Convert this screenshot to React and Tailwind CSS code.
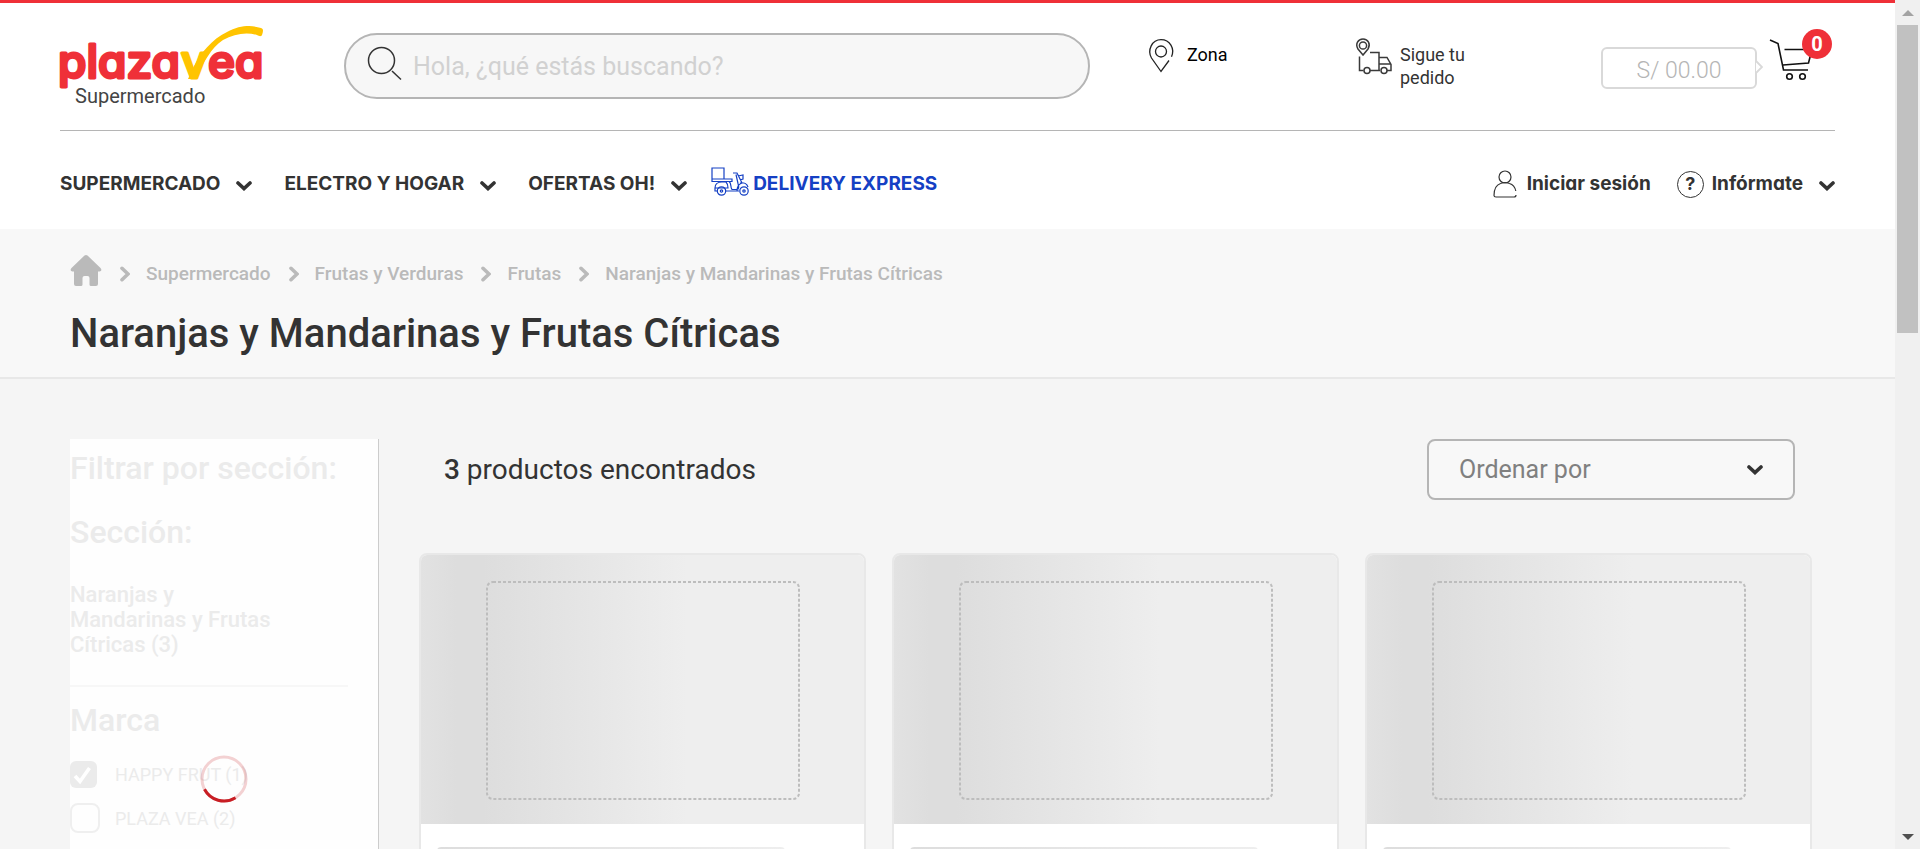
import React from "react";

function Chevron({ className = "" }) {
  return (
    <svg viewBox="0 0 16 10" className={"h-[10px] w-4 shrink-0 " + className} fill="none" stroke="currentColor" strokeWidth="3.6" aria-hidden="true">
      <path d="M2 2 8 7.600 14 2" strokeLinecap="round" />
    </svg>
  );
}

function Crumb({ children, last }) {
  return (
    <li className="flex items-center gap-4">
      <svg viewBox="0 0 10 16" className="h-4 w-[10px] shrink-0" fill="none" stroke="currentColor" strokeWidth="3.6" aria-hidden="true">
        <path d="M2 2.300 8 8l-6 5.700" strokeLinecap="round" />
      </svg>
      <a href="#categoria" aria-current={last ? "page" : undefined}>{children}</a>
    </li>
  );
}

function Logo() {
  return (
    <a href="#inicio" className="block w-[210px] pt-[21px]" aria-label="plazavea Supermercado">
      <svg viewBox="0 0 210 70" className="h-[70px] w-[210px] overflow-visible" aria-hidden="true">
        <g
          className="font-['Inter',sans-serif] text-[46px] font-medium [font-feature-settings:'cv11'_1]"
          fill="#ef3038"
          stroke="#ef3038"
          strokeWidth="3"
          strokeLinejoin="round"
        >
          <text x="-2" y="54">plaza</text>
          <text x="121" y="54" fill="#ffc400" stroke="#ffc400">v</text>
          <text x="148" y="54">ea</text>
        </g>
        <path d="M128 55 134 42C140 30 152 15 167 8 180 1 192 1 201 4 204 5 203 8 202 11 201 13 199 12 197 11 186 8 174 10 163 16 151 24 144 38 135 55Z" fill="#ffc400" />
      </svg>
      <span className="-mt-[10px] block pl-[15px] text-[20px] leading-6 text-[#444]">Supermercado</span>
    </a>
  );
}

function TopBar() {
  return (
    <div className="flex h-32 items-start border-b border-[#b5b5b5]">
      <div className="w-[284px] shrink-0">
        <Logo />
      </div>
      <div className="mt-[30px] flex h-[66px] min-w-0 flex-1 items-center rounded-full border-2 border-[#b5b5b5] bg-[#f7f7f7] pl-[21px]">
        <svg viewBox="0 0 36 36" className="-mt-1 h-9 w-9 shrink-0" fill="none" stroke="#333" strokeWidth="1.5" aria-hidden="true">
          <circle cx="14.500" cy="14.500" r="13" />
          <path d="m25 25 9 8.500" />
        </svg>
        <input type="search" aria-label="Buscar productos" className="ml-[10px] h-10 min-w-0 flex-1 bg-transparent text-[25px] outline-none placeholder:text-[#d1d1d1]" placeholder="Hola, ¿qué estás buscando?" />
      </div>
      <div className="flex w-[745px] shrink-0 pt-9">
        <a href="#zona" className="flex w-[266px] items-start pl-[59px] text-[18px] leading-[23px] text-black">
          <svg viewBox="0 0 24 34" className="h-[34px] w-6 shrink-0 overflow-visible" fill="none" stroke="#222" strokeWidth="1.3" aria-hidden="true">
            <path d="M20 21.500 12 32.500 2.500 19C-2 11 3 .7 12 .7c9 0 14 9 10.500 17" />
            <circle cx="12" cy="12.500" r="5.500" />
          </svg>
          <span className="ml-[14px] pt-1">Zona</span>
        </a>
        <a href="#pedido" className="flex w-[245px] items-start text-[18px] leading-[23px] text-[#333]">
          <svg viewBox="0 0 36 36" className="h-9 w-9 shrink-0 overflow-visible" fill="none" stroke="#3a3a3a" strokeWidth="1.5" aria-hidden="true">
            <path d="M7 16 2 10C-1 5 2 0 7 0s8 5 5 10ZM14 13.500h9V31.500M3.500 17.500v14h4M14 31.500h10M23 18.500h8l4 7v6h-4M23 25h11.500" />
            <circle cx="7" cy="6.500" r="3.600" />
            <circle cx="11" cy="31.500" r="3" />
            <circle cx="28" cy="31.500" r="3" />
          </svg>
          <span className="ml-2 w-20 pt-1">Sigue tu pedido</span>
        </a>
        <a href="#carrito" className="relative flex items-start">
          <span className="mt-2 flex h-[42px] w-[156px] items-center justify-center rounded-md border-2 border-[#d9d9d9] pt-[6px] text-[23px] font-light text-[#b5b5b5]">S/ 00.00</span>
          <svg viewBox="0 0 8 14" className="mt-[21px] -ml-[2px] h-[14px] w-2" fill="#fff" stroke="#d9d9d9" strokeWidth="1.8" aria-hidden="true">
            <path d="m1 1 6 6-6 6" />
          </svg>
          <svg viewBox="0 0 44 42" className="ml-[6px] h-[42px] w-11" fill="none" stroke="#111" strokeWidth="1.6" aria-hidden="true">
            <path d="m1 1 8 3.500 5.500 26.500H39M15.500 10.500H43l-3.500 13.500-25.500 2" />
            <circle cx="20.500" cy="37.500" r="2.800" />
            <circle cx="33.500" cy="37.500" r="2.800" />
          </svg>
          <span className="absolute -top-[10px] left-[201px] flex h-[30px] w-[30px] items-center justify-center rounded-full bg-[#ef3038] text-[20px] font-bold text-white">0</span>
        </a>
      </div>
    </div>
  );
}

function MainNav() {
  return (
    <nav className="flex h-[98px] items-center justify-between pt-2 font-['Inter',sans-serif] text-[19px] font-bold text-[#333] [font-feature-settings:'cv11'_1]">
      <div className="flex items-center gap-8">
        {["SUPERMERCADO", "ELECTRO Y HOGAR", "OFERTAS OH!"].map((name) => (
          <button key={name} type="button" className="flex items-center gap-4">
            {name}
            <Chevron className="mt-1" />
          </button>
        ))}
        <a href="#express" className="-ml-2 flex items-center gap-1 text-[#1540c4]">
          <svg viewBox="0 0 38 30" className="-mt-1 h-[30px] w-[38px]" fill="none" stroke="currentColor" strokeWidth="1.2" aria-hidden="true">
            <path d="M1 1h12v11H1zM1 12h20v2.500H1zM4 21c0-4 3-6 7-6h4c2 2 2 4 2 6H4M4 21v3h3M14 24h14M21 14.500h-3c3 2 1 6 3 8h5c2 0 2-3 1-6l-2-9M22 6h4l5 10c-3 1-5 4-5 8M27 9l5-1v4l-3 1M29 16c4-1 7 1 8 4" />
            <circle cx="10.500" cy="24" r="4.200" />
            <circle cx="10.500" cy="24" r="1.200" />
            <circle cx="33" cy="24" r="4.200" />
            <circle cx="33" cy="24" r="1.200" />
          </svg>
          DELIVERY EXPRESS
        </a>
      </div>
      <div className="flex items-center gap-[26px]">
        <a href="#sesion" className="flex items-center gap-[10px]">
          <svg viewBox="0 0 24 28" className="h-7 w-6" fill="none" stroke="currentColor" strokeWidth="1.2" aria-hidden="true">
            <circle cx="12" cy="7" r="6" />
            <path d="M7.500 13.500C3 15 1 19 1 25.500c0 1 1 1.500 2 1.500h18c1 0 2-1 2-2M22.800 21c-.8-4-3-6.500-6.300-7.500M7.500 13.500q4.500-2 9 0" />
          </svg>
          Iniciar sesión
        </a>
        <button type="button" className="flex items-center">
          <span className="mr-2 flex h-[27px] w-[27px] items-center justify-center rounded-full border border-[#333] text-[18px] leading-none">?</span>
          Infórmate
          <Chevron className="mt-1 ml-4" />
        </button>
      </div>
    </nav>
  );
}

function Filters() {
  return (
    <aside className="relative w-[309px] shrink-0 border-r border-[#ccc] bg-[#fefefe] pt-[10px] pr-[30px] text-[#ebebeb]">
      <h2 className="text-[32px] leading-[38px] font-medium whitespace-nowrap">Filtrar por sección:</h2>
      <h3 className="mt-[26px] text-[32px] leading-[38px] font-medium">Sección:</h3>
      <a href="#naranjas" className="mt-[31px] block w-[216px] text-[22px] leading-[25px] font-medium">
        Naranjas y Mandarinas y Frutas Cítricas (3)
      </a>
      <hr className="mt-7 border-t-2 border-[#f7f7f7]" />
      <h3 className="mt-[14px] text-[32px] leading-[38px] font-medium">Marca</h3>
      <div className="mt-[19px] flex h-8 items-center text-[18px]">
        <span className="grid w-[45px] items-center">
          <input id="happy" type="checkbox" defaultChecked className="col-start-1 row-start-1 h-[27px] w-[27px] appearance-none rounded-md bg-[#ebebeb]" />
          <svg viewBox="0 0 27 27" className="pointer-events-none col-start-1 row-start-1 h-[27px] w-[27px]" fill="none" stroke="#fff" strokeWidth="3.6" aria-hidden="true">
            <path d="m5 15 5 5.500L19.500 7" />
          </svg>
        </span>
        <label htmlFor="happy">HAPPY FRUT (1)</label>
      </div>
      <div className="mt-3 flex h-8 items-center text-[18px]">
        <span className="grid w-[45px]">
          <input id="plaza" type="checkbox" className="h-[30px] w-[30px] appearance-none rounded-lg border-2 border-[#efefef]" />
        </span>
        <label htmlFor="plaza">PLAZA VEA (2)</label>
      </div>
      <svg viewBox="0 0 48 48" className="absolute top-[316px] left-[130px] h-12 w-12" fill="none" strokeWidth="3" role="img" aria-label="Cargando">
        <circle cx="24" cy="24" r="22" stroke="#c81e24" strokeOpacity="0.2" />
        <path d="M4.500 34.200A22 22 0 0 0 35.500 42.800" stroke="#c81e24" />
      </svg>
    </aside>
  );
}

function SkeletonCard() {
  return (
    <li className="overflow-hidden rounded-lg border-2 border-[#e8e8e8] bg-white">
      <div className="flex h-[269px] justify-center bg-[linear-gradient(to_right,#e2e2e2_0%,#dddddd_8%,#dddddd_14%,#eeeeee_60%)] pt-[26px]">
        <svg className="h-[219px] w-[314px]" fill="none" stroke="#bdbdbd" strokeWidth="2" strokeDasharray="3 2" viewBox="0 0 314 219" aria-hidden="true">
          <rect x="1" y="1" width="312" height="217" rx="6" />
        </svg>
      </div>
      <div className="px-4 pt-[23px] pb-10">
        <div className="h-6 w-[348px] max-w-full rounded-sm bg-linear-to-r from-[#dddddd] to-[#eeeeee]" />
      </div>
    </li>
  );
}

function Results() {
  return (
    <section className="min-w-0 flex-1 pr-[13px] pl-10">
      <div className="flex items-center justify-between pr-[17px] pl-[25px]">
        <p className="text-[28px] leading-9 text-[#333]">
          <b className="font-medium">3</b> productos encontrados
        </p>
        <div className="grid w-[368px] items-center">
          <select aria-label="Ordenar por" className="col-start-1 row-start-1 h-[61px] appearance-none rounded-lg border-2 border-[#b5b5b5] bg-[#f8f8f8] px-[30px] text-[25px] text-[#808080]">
            <option>Ordenar por</option>
          </select>
          <Chevron className="pointer-events-none col-start-1 row-start-1 mr-8 justify-self-end text-[#333]" />
        </div>
      </div>
      <ul className="mt-[53px] grid grid-cols-3 gap-[26px]">
        <SkeletonCard />
        <SkeletonCard />
        <SkeletonCard />
      </ul>
    </section>
  );
}

function ScrollTrack() {
  return (
    <div className="flex w-[25px] shrink-0 flex-col items-center bg-[#f0f0f0]" aria-hidden="true">
      <div className="flex h-[25px] items-center">
        <svg viewBox="0 0 12 6" className="h-[6px] w-3" fill="#a3a3a3"><path d="M0 6 6 0l6 6z" /></svg>
      </div>
      <div className="min-h-0 w-[21px] flex-1">
        <div className="h-[308px] bg-[#c1c1c1]" />
      </div>
      <div className="flex h-[25px] items-center">
        <svg viewBox="0 0 12 6" className="h-[6px] w-3" fill="#505050"><path d="M0 0h12L6 6z" /></svg>
      </div>
    </div>
  );
}

export default function App() {
  return (
    <div className="flex h-screen overflow-hidden bg-[#f5f5f5] font-['Roboto',sans-serif]">
      <div className="min-w-0 flex-1 overflow-hidden">
        <header className="border-t-3 border-[#ef3038] bg-white px-[60px]">
          <TopBar />
          <MainNav />
        </header>
        <div className="border-b-2 border-[#e8e8e8] bg-[#f8f8f8] px-[70px] pt-6 pb-5">
          <ol className="flex h-[42px] items-center gap-[18px] text-[19px] font-medium text-[#bababa]">
            <li>
              <a href="#inicio" aria-label="Inicio" className="block">
                <svg viewBox="0 0 32 32" className="-mt-2 h-8 w-8" fill="currentColor" aria-hidden="true">
                  <path d="M14.500 1.600a2.200 2.200 0 0 1 3 0L30.500 14c1.600 1.600.8 3.400-1 3.400H28V30a2 2 0 0 1-2 2h-5a1.500 1.500 0 0 1-1.500-1.500V24q0-2-2-2h-3q-2 0-2 2v6.500A1.500 1.500 0 0 1 11 32H6a2 2 0 0 1-2-2V17.400H2.500c-1.800 0-2.600-1.800-1-3.400Z" />
                </svg>
              </a>
            </li>
            <Crumb>Supermercado</Crumb>
            <Crumb>Frutas y Verduras</Crumb>
            <Crumb>Frutas</Crumb>
            <Crumb last>Naranjas y Mandarinas y Frutas Cítricas</Crumb>
          </ol>
          <h1 className="mt-4 text-[40px] leading-[46px] font-medium text-[#333]">Naranjas y Mandarinas y Frutas Cítricas</h1>
        </div>
        <main className="flex px-[70px] pt-[60px]">
          <Filters />
          <Results />
        </main>
      </div>
      <ScrollTrack />
    </div>
  );
}
